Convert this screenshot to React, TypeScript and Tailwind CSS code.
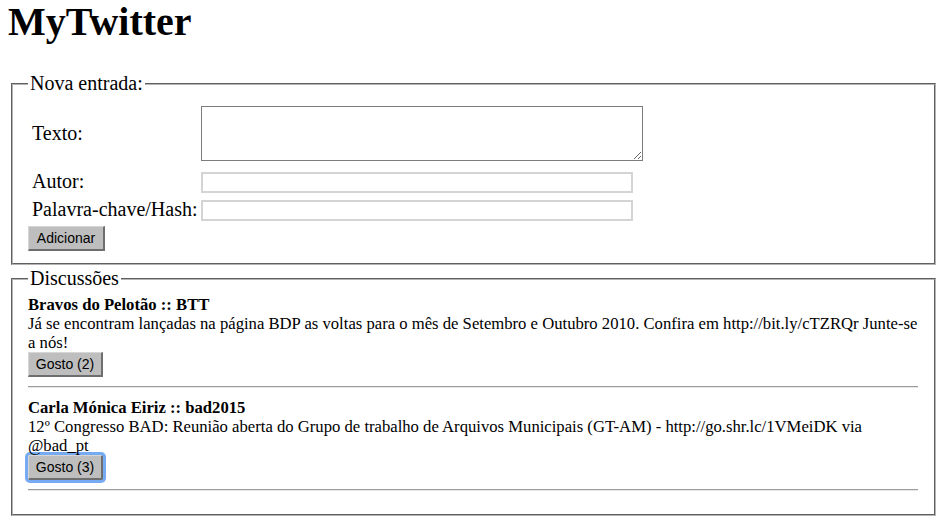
import React from "react";

const serif = "font-['Liberation_Serif','Times_New_Roman',serif]";

function Btn({ label, w, focus }: { label: string; w: string; focus?: boolean }) {
  return (
    <button
      type="button"
      className={`${w} h-[25px] bg-[#bebebe] text-black text-[14px] font-['Liberation_Sans',Arial,sans-serif] leading-none border-t border-l border-t-[#d6d6d6] border-l-[#d6d6d6] border-r-2 border-b-2 border-r-[#6e6e6e] border-b-[#6e6e6e] flex items-center justify-center ${
        focus ? "ring-[3px] ring-[#76abf3] rounded-[2px]" : ""
      }`}
    >
      {label}
    </button>
  );
}

export default function App() {
  const fs =
    "border-2 [border-style:groove] border-[#b4b4b4] pl-[15px] pr-[16px] min-w-0";
  const legend = "px-[2px] text-[20px] leading-[23px]";
  return (
    <div className={`${serif} text-black bg-white min-h-[524px] pl-[11px] pr-[7px]`}>
      <h1 className="text-[40px] leading-[44px] font-bold -ml-[3px] mb-[28px]">MyTwitter</h1>

      <fieldset className={`${fs} pt-[7px] pb-[12px]`}>
        <legend className={legend}>Nova entrada:</legend>
        <div className="flex flex-col">
          <div className="flex items-center mt-[4px]">
            <label className="w-[173px] pl-[4px] text-[20px] leading-[23px]">Texto:</label>
            <textarea className="w-[442px] h-[55px] border border-[#7c7c7c] bg-white" />
          </div>
          <div className="flex items-end mt-[9px]">
            <label className="w-[173px] pl-[4px] text-[20px] leading-[23px]">Autor:</label>
            <input className="w-[432px] h-[21px] border-2 border-[#d4d4d4] bg-white" />
          </div>
          <div className="flex items-end mt-[5px]">
            <label className="w-[173px] pl-[4px] text-[20px] leading-[23px]">Palavra-chave/Hash:</label>
            <input className="w-[432px] h-[21px] border-2 border-[#d4d4d4] bg-white" />
          </div>
          <div className="mt-[5px]">
            <Btn label="Adicionar" w="w-[77px]" />
          </div>
        </div>
      </fieldset>

      <fieldset className={`${fs} mt-[2px] pt-[5px] pb-[23px]`}>
        <legend className={legend}>Discussões</legend>
        <div className="text-[16.67px] leading-[19px]">
          <div className="font-bold">Bravos do Pelotão :: BTT</div>
          <p>
            Já se encontram lançadas na página BDP as voltas para o mês de Setembro e Outubro 2010. Confira em
            http://bit.ly/cTZRQr Junte-se a nós!
          </p>
          <Btn label="Gosto (2)" w="w-[75px]" />
          <hr className="mt-[9px] h-0 border-t border-b border-t-[#9c9c9c] border-b-[#e6e6e6]" />
          <div className="font-bold mt-[10px]">Carla Mónica Eiriz :: bad2015</div>
          <p>
            12º Congresso BAD: Reunião aberta do Grupo de trabalho de Arquivos Municipais (GT-AM) -
            http://go.shr.lc/1VMeiDK via @bad_pt
          </p>
          <Btn label="Gosto (3)" w="w-[75px]" focus />
          <hr className="mt-[9px] h-0 border-t border-b border-t-[#9c9c9c] border-b-[#e6e6e6]" />
        </div>
      </fieldset>
    </div>
  );
}
